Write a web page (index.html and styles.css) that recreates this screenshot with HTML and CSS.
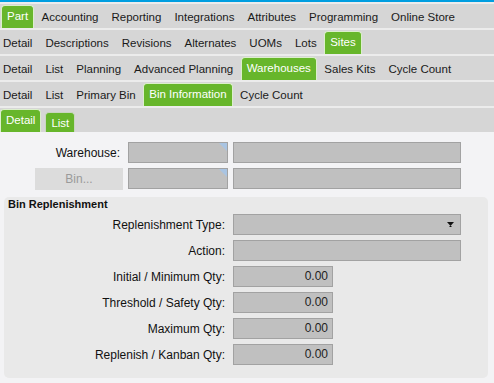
FILE: index.html
```
<!DOCTYPE html>
<html lang="en">
<head>
    <meta charset="UTF-8">
    <title>Part - Bin Information</title>
    <link rel="stylesheet" href="styles.css">
</head>
<body>
    <div class="topline"></div>

    <div class="tabrow">
        <span class="tab on first">Part</span>
        <span class="tab">Accounting</span>
        <span class="tab">Reporting</span>
        <span class="tab">Integrations</span>
        <span class="tab">Attributes</span>
        <span class="tab">Programming</span>
        <span class="tab">Online Store</span>
    </div>
    <div class="tabrow">
        <span class="tab lead">Detail</span>
        <span class="tab">Descriptions</span>
        <span class="tab">Revisions</span>
        <span class="tab">Alternates</span>
        <span class="tab">UOMs</span>
        <span class="tab">Lots</span>
        <span class="tab on">Sites</span>
    </div>
    <div class="tabrow">
        <span class="tab lead">Detail</span>
        <span class="tab">List</span>
        <span class="tab">Planning</span>
        <span class="tab">Advanced Planning</span>
        <span class="tab on">Warehouses</span>
        <span class="tab">Sales Kits</span>
        <span class="tab">Cycle Count</span>
    </div>
    <div class="tabrow">
        <span class="tab lead">Detail</span>
        <span class="tab">List</span>
        <span class="tab">Primary Bin</span>
        <span class="tab on">Bin Information</span>
        <span class="tab">Cycle Count</span>
    </div>
    <div class="tabrow">
        <span class="tab on edge">Detail</span>
        <span class="tab on low">List</span>
    </div>

    <div class="content">
        <div class="field-row">
            <label class="head">Warehouse:</label>
            <div class="box w100 lookup"></div>
            <div class="box w228"></div>
        </div>
        <div class="field-row">
            <div class="head"><button class="lookup-btn" disabled>Bin...</button></div>
            <div class="box w100 lookup"></div>
            <div class="box w228"></div>
        </div>

        <div class="group">
            <div class="group-title">Bin Replenishment</div>
            <div class="field-row">
                <label class="head wide">Replenishment Type:</label>
                <div class="box w228 select">
                    <svg width="7" height="5" viewBox="0 0 7 5"><path d="M0 0H7L3.5 4Z" fill="#111"/><path d="M2.5 4.5H4.5" stroke="#111" stroke-width="1"/></svg>
                </div>
            </div>
            <div class="field-row">
                <label class="head wide">Action:</label>
                <div class="box w228"></div>
            </div>
            <div class="field-row">
                <label class="head wide">Initial / Minimum Qty:</label>
                <div class="box w100 num">0.00</div>
            </div>
            <div class="field-row">
                <label class="head wide">Threshold / Safety Qty:</label>
                <div class="box w100 num">0.00</div>
            </div>
            <div class="field-row">
                <label class="head wide">Maximum Qty:</label>
                <div class="box w100 num">0.00</div>
            </div>
            <div class="field-row">
                <label class="head wide">Replenish / Kanban Qty:</label>
                <div class="box w100 num">0.00</div>
            </div>
        </div>
    </div>
</body>
</html>
```

FILE: styles.css
```
body {
    margin: 0;
    font-family: "Liberation Sans", Arial, sans-serif;
    font-size: 12px;
    color: #111;
    background-color: #f3f3f5;
    height: 383px;
    overflow: hidden;
}
.topline {
    height: 2px;
    background: #009ee0;
}
.tabrow {
    display: flex;
    align-items: flex-end;
    height: 24px;
    border-top: 2px solid #ececec;
    background: #d6d6d6;
    font-size: 11.5px;
    white-space: nowrap;
}
.tab {
    height: 23px;
    line-height: 24px;
    padding: 0 5.5px;
    margin: 0 1px;
    color: #1a1a1a;
}
.tab.lead {
    margin-left: -2.5px;
}
.tab.on {
    box-sizing: border-box;
    padding: 0 5px 1px;
    line-height: 21px;
    background: #67b62b;
    color: #fff;
    border: 1px solid #dcefcc;
    border-bottom: none;
    border-radius: 4px 4px 0 0;
}
.tab.first {
    margin-left: 1px;
}
.tab.edge {
    margin-left: 0;
}
.tab.low {
    height: 20px;
    line-height: 20px;
    padding-bottom: 0;
    border-color: #c9d6c0;
    margin-left: 3px;
}
.content {
    padding-top: 10px;
}
.field-row {
    display: flex;
    align-items: center;
    gap: 5px;
    height: 21px;
    margin-bottom: 5px;
}
.head {
    width: 123px;
    flex-shrink: 0;
    box-sizing: border-box;
    padding-right: 3px;
    text-align: right;
    display: flex;
    justify-content: flex-end;
}
.head.wide {
    width: 224px;
}
.lookup-btn {
    width: 88px;
    height: 22px;
    margin-right: -3px;
    border: none;
    background: #dcdcdc;
    color: #9a9a9a;
    font-family: inherit;
    font-size: 12px;
    padding: 0;
}
.box {
    box-sizing: border-box;
    height: 21px;
    background: #c0c0c0;
    border: 1px solid #a2a2a2;
    position: relative;
}
.w100 {
    width: 100px;
}
.w228 {
    width: 228px;
}
.lookup::after {
    content: "";
    position: absolute;
    top: 0;
    right: 0;
    border-top: 8px solid #a9c4e2;
    border-left: 8px solid transparent;
}
.select svg {
    position: absolute;
    right: 6px;
    top: 7px;
}
.num {
    text-align: right;
    padding-right: 4px;
    line-height: 19px;
    color: #222;
}
.group {
    margin: 8px 6px 0 4px;
    padding: 1px 0 8px;
    background: #e9e9e9;
    border-radius: 5px;
}
.group-title {
    font-weight: bold;
    font-size: 11px;
    line-height: 13px;
    padding-left: 4px;
    margin-bottom: 3px;
}
```
